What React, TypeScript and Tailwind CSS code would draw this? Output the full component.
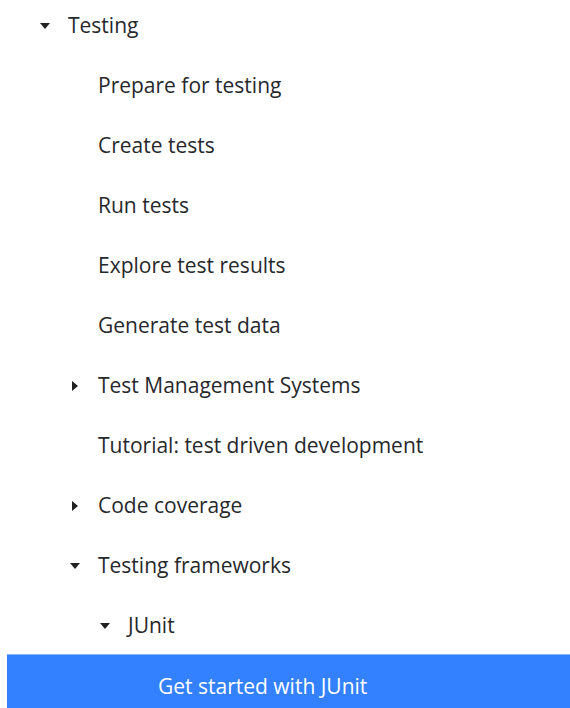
type Node = {
  label: string;
  level: number;
  state?: "open" | "closed";
  selected?: boolean;
};

const items: Node[] = [
  { label: "Testing", level: 0, state: "open" },
  { label: "Prepare for testing", level: 1 },
  { label: "Create tests", level: 1 },
  { label: "Run tests", level: 1 },
  { label: "Explore test results", level: 1 },
  { label: "Generate test data", level: 1 },
  { label: "Test Management Systems", level: 1, state: "closed" },
  { label: "Tutorial: test driven development", level: 1 },
  { label: "Code coverage", level: 1, state: "closed" },
  { label: "Testing frameworks", level: 1, state: "open" },
  { label: "JUnit", level: 2, state: "open" },
  { label: "Get started with JUnit", level: 3, selected: true },
];

function Caret({ open }: { open: boolean }) {
  return open ? (
    <svg width="10" height="6" viewBox="0 0 10 6" className="fill-[#222]">
      <path d="M0 0h10L5 6z" />
    </svg>
  ) : (
    <svg width="6" height="10" viewBox="0 0 6 10" className="fill-[#222]">
      <path d="M0 0v10l6-5z" />
    </svg>
  );
}

export default function App() {
  return (
    <div className="w-[570px] h-[708px] overflow-hidden bg-white font-['Open_Sans','Noto_Sans',sans-serif] text-[21px] text-[#27282c]">
      <ul className="-mt-[4px]">
        {items.map((item, i) => (
          <li
            key={i}
            className={
              item.selected
                ? "h-[64px] -mt-[2px] ml-[7px] flex items-center bg-[#3381ff] border-t border-[#8ab6ff] text-white"
                : "h-[60px] flex items-center"
            }
            style={{ paddingLeft: 68 + item.level * 30 - (item.selected ? 7 : 0) }}
          >
            <span className="relative">
              {item.state && (
                <span className="absolute -left-[28px] top-0 bottom-0 w-[10px] flex items-center justify-center">
                  <Caret open={item.state === "open"} />
                </span>
              )}
              {item.label}
            </span>
          </li>
        ))}
      </ul>
    </div>
  );
}
